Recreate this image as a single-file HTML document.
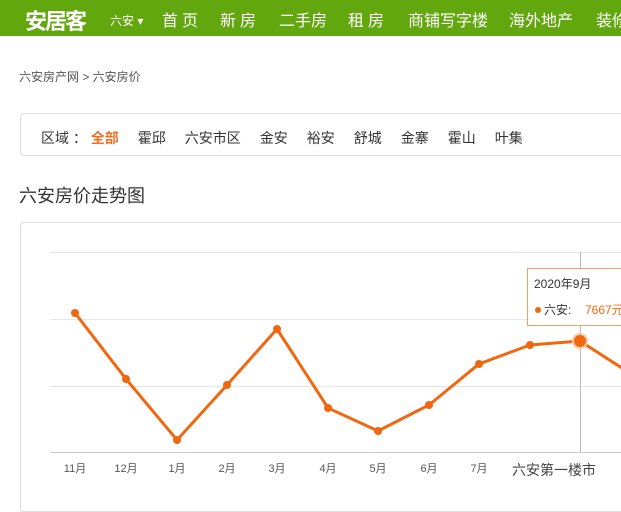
<!DOCTYPE html>
<html><head><meta charset="utf-8"><style>
*{margin:0;padding:0;box-sizing:border-box}
body{width:621px;height:498px;overflow:hidden;background:#fff;font-family:"Liberation Sans","Noto Sans CJK SC",sans-serif;position:relative;color:#333}
.hd{position:absolute;left:0;top:0;width:621px;height:36px;background:#62a70d;color:#fff;white-space:nowrap}
.logo{position:absolute;left:25px;top:4px;font-size:22px;font-weight:bold;letter-spacing:-2px}
.city{position:absolute;left:110px;top:12px;font-size:12px}
.nav span{position:absolute;top:7px;font-size:16px}
.bc{position:absolute;left:19px;top:68px;font-size:12px;color:#555}
.flt{position:absolute;left:20px;top:113px;width:620px;height:43px;border:1px solid #ddd;border-radius:4px;font-size:14px;color:#333}
.flt div{position:absolute;top:14px;left:20px;white-space:nowrap}
.flt span{margin-right:19px}
.t{position:absolute;left:19px;top:182px;font-size:18px;color:#333}
.ch{position:absolute;left:20px;top:222px;width:620px;height:290px;border:1px solid #ddd;border-radius:4px}
svg{position:absolute;left:0;top:0}
</style></head><body>
<div class="hd"><div class="logo">安居客</div><div class="city">六安 ▾</div>
<div class="nav"><span style="left:162px;letter-spacing:4px">首页</span><span style="left:220px;letter-spacing:4px">新房</span><span style="left:279px">二手房</span><span style="left:348px;letter-spacing:4px">租房</span><span style="left:408px">商铺写字楼</span><span style="left:509px">海外地产</span><span style="left:596px">装修</span></div></div>
<div class="bc">六安房产网 &gt; 六安房价</div>
<div class="flt"><div>区域 ： <span style="color:#f26d1f;font-weight:bold">全部</span><span>霍邱</span><span>六安市区</span><span>金安</span><span>裕安</span><span>舒城</span><span>金寨</span><span>霍山</span><span>叶集</span></div></div>
<div class="t">六安房价走势图</div>
<div class="ch"></div>
<svg width="621" height="498">
<g stroke="#e6e6e6" stroke-width="1"><line x1="50" y1="252.5" x2="621" y2="252.5"/><line x1="50" y1="319.5" x2="621" y2="319.5"/><line x1="50" y1="386.5" x2="621" y2="386.5"/></g>
<line x1="50" y1="452.5" x2="621" y2="452.5" stroke="#ccc"/>
<line x1="580.5" y1="252" x2="580.5" y2="452" stroke="#bbb"/>
<polyline fill="none" stroke="#f0670f" stroke-width="3" points="75,313 126,379 177,440 227,385 277,329 328,408 378,431 429,405 479,364 530,345 580,341 625,370"/>
<g fill="#f0670f"><circle cx="75" cy="313" r="4"/><circle cx="126" cy="379" r="4"/><circle cx="177" cy="440" r="4"/><circle cx="227" cy="385" r="4"/><circle cx="277" cy="329" r="4"/><circle cx="328" cy="408" r="4"/><circle cx="378" cy="431" r="4"/><circle cx="429" cy="405" r="4"/><circle cx="479" cy="364" r="4"/><circle cx="530" cy="345" r="4"/><circle cx="580" cy="341" r="8" fill="#f9c9a8"/><circle cx="580" cy="341" r="6"/></g>
<g font-size="11" fill="#555" text-anchor="middle"><text x="75" y="472">11月</text><text x="126" y="472">12月</text><text x="177" y="472">1月</text><text x="227" y="472">2月</text><text x="277" y="472">3月</text><text x="328" y="472">4月</text><text x="378" y="472">5月</text><text x="429" y="472">6月</text><text x="479" y="472">7月</text></g>
<text x="512" y="475" font-size="14" fill="#444">六安第一楼市</text>
<rect x="527.5" y="268.5" width="100" height="57" fill="#fff" fill-opacity="0.95" stroke="#f0a060"/>
<text x="534" y="288" font-size="12" fill="#333">2020年9月</text>
<circle cx="538" cy="310" r="3" fill="#f0670f"/>
<text x="544" y="314" font-size="12" fill="#333">六安:</text>
<text x="585" y="314" font-size="12" fill="#f0670f">7667元</text>
</svg>
</body></html>
